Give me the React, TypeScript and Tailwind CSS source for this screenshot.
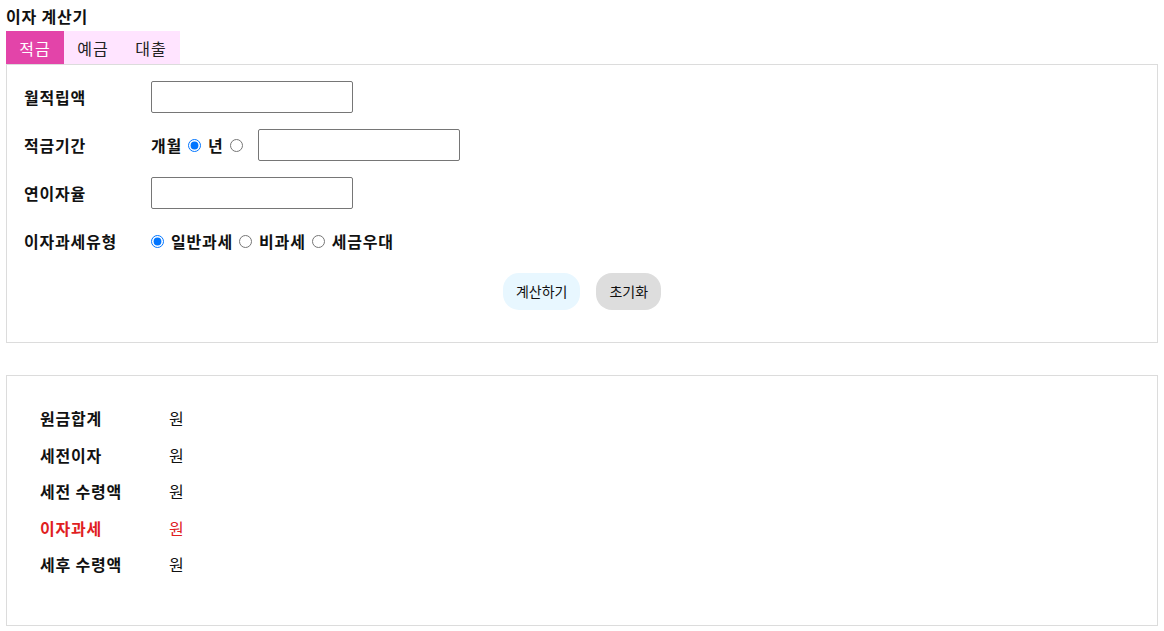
import React, { useState } from "react";

type Tab = "적금" | "예금" | "대출";

const font = "font-['Malgun_Gothic','Noto_Sans_CJK_KR',sans-serif]";

function Row({ label, children }: { label: string; children: React.ReactNode }) {
  return (
    <div className="flex items-center h-[48px]">
      <div className="w-[127px] font-bold text-[16px] tracking-[0.8px]">{label}</div>
      <div className="flex items-center">{children}</div>
    </div>
  );
}

export default function App() {
  const [tab, setTab] = useState<Tab>("적금");
  const [unit, setUnit] = useState("month");
  const [tax, setTax] = useState("normal");

  const results = [
    { label: "원금합계", red: false },
    { label: "세전이자", red: false },
    { label: "세전 수령액", red: false },
    { label: "이자과세", red: true },
    { label: "세후 수령액", red: false },
  ];

  const txt = "font-bold text-[16px] tracking-[0.8px]";

  return (
    <div className={`${font} text-[#111] px-[6px] pt-[4px] pb-[6px] w-[1164px]`}>
      <h1 className="font-bold text-[16px] tracking-[0.8px] leading-[24px]">이자 계산기</h1>
      <div className="flex mt-[3px]">
        {(["적금", "예금", "대출"] as Tab[]).map((t) => (
          <button
            key={t}
            onClick={() => setTab(t)}
            className={`h-[33px] w-[58px] text-[16px] tracking-[1px] ${
              tab === t ? "bg-[#e344a9] text-white" : "bg-[#ffe4ff] text-[#222]"
            }`}
          >
            {t}
          </button>
        ))}
      </div>

      <div className="border border-[#dcdcdc] px-[17px] pt-[8px] pb-[32px]">
        <Row label="월적립액">
          <input className="w-[202px] h-[32px] border border-[#767676] rounded-[2px] px-2" />
        </Row>
        <Row label="적금기간">
          <span className={txt}>개월</span>
          <input
            type="radio"
            checked={unit === "month"}
            onChange={() => setUnit("month")}
            className="ml-[6px] mr-[7px] w-[13px] h-[13px]"
          />
          <span className={txt}>년</span>
          <input
            type="radio"
            checked={unit === "year"}
            onChange={() => setUnit("year")}
            className="ml-[6px] w-[13px] h-[13px]"
          />
          <input className="ml-[15px] w-[202px] h-[32px] border border-[#767676] rounded-[2px] px-2" />
        </Row>
        <Row label="연이자율">
          <input className="w-[202px] h-[32px] border border-[#767676] rounded-[2px] px-2" />
        </Row>
        <Row label="이자과세유형">
          <input
            type="radio"
            checked={tax === "normal"}
            onChange={() => setTax("normal")}
            className="mr-[7px] w-[13px] h-[13px]"
          />
          <span className={txt}>일반과세</span>
          <input
            type="radio"
            checked={tax === "none"}
            onChange={() => setTax("none")}
            className="ml-[6px] mr-[7px] w-[13px] h-[13px]"
          />
          <span className={txt}>비과세</span>
          <input
            type="radio"
            checked={tax === "benefit"}
            onChange={() => setTax("benefit")}
            className="ml-[6px] mr-[7px] w-[13px] h-[13px]"
          />
          <span className={txt}>세금우대</span>
        </Row>
        <div className="flex justify-center gap-[16px] mt-[8px]">
          <button className="h-[37px] px-[13px] rounded-2xl bg-[#e8f7ff] text-[14px]">계산하기</button>
          <button className="h-[37px] px-[13px] rounded-2xl bg-[#dddddd] text-[14px]">초기화</button>
        </div>
      </div>

      <div className="border border-[#dcdcdc] mt-[32px] pl-[33px] pt-[24px] pb-[42px]">
        {results.map((r) => (
          <div
            key={r.label}
            className={`flex items-center h-[36.5px] text-[16px] tracking-[0.8px] ${r.red ? "text-[#e0201f]" : ""}`}
          >
            <div className="w-[129px] font-bold">{r.label}</div>
            <div>원</div>
          </div>
        ))}
      </div>
    </div>
  );
}
